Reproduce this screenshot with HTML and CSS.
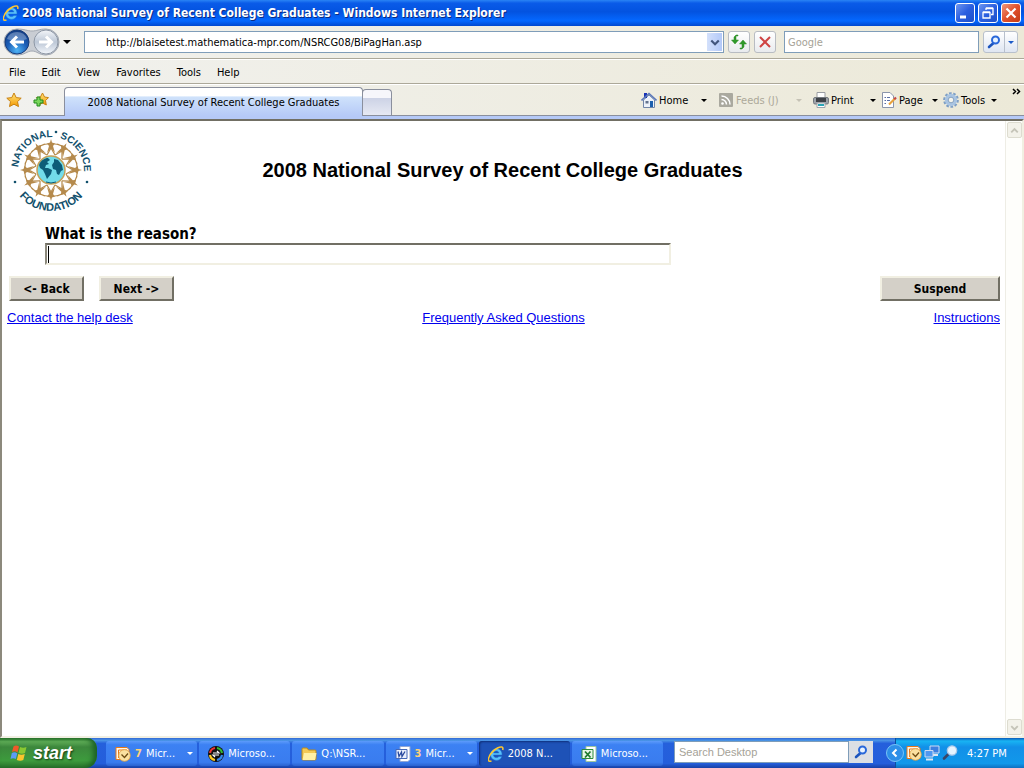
FILE: index.html
```html
<!DOCTYPE html>
<html lang="en">
<head>
    <meta charset="UTF-8">
    <title>2008 National Survey of Recent College Graduates</title>
    <link rel="stylesheet" href="styles.css">
</head>
<body>
    <!-- shared icons -->
    <svg class="defs" width="0" height="0">
        <defs>
            <linearGradient id="gold" x1="0" y1="0" x2="0" y2="1">
                <stop offset="0" stop-color="#ffe680"/><stop offset="1" stop-color="#f59a00"/>
            </linearGradient>
            <radialGradient id="blue-ball" cx="50%" cy="85%" r="85%">
                <stop offset="0" stop-color="#4fb4f5"/><stop offset=".5" stop-color="#1c5fb8"/><stop offset="1" stop-color="#123a80"/>
            </radialGradient>
            <linearGradient id="grey-ball" x1="0" y1="0" x2="0" y2="1">
                <stop offset="0" stop-color="#f4f6f9"/><stop offset=".5" stop-color="#bcc7d6"/><stop offset="1" stop-color="#f2f6fb"/>
            </linearGradient>
        </defs>
        <symbol id="ie" viewBox="0 0 16 16">
            <path d="M14 9H5.500c.1 1.700 1.300 2.600 2.900 2.600 1.200 0 1.900-.4 2.400-1.100h3c-.8 2.500-2.800 3.900-5.400 3.900-3.500 0-5.900-2.400-5.900-5.800 0-3.500 2.400-5.900 5.900-5.900 3.600 0 5.900 2.500 5.600 6.300zM5.600 6.900h5.200c-.1-1.200-1.100-2-2.500-2s-2.400.8-2.700 2z" fill="#58c0fa" stroke="#1b6fd0" stroke-width=".5"/>
            <path d="M3.500 14.800C1 16.200-.6 14.500 1 11 2.500 7.500 6 3.800 9.500 2c3.600-1.900 6.200-1.400 5.200 2" fill="none" stroke="#ffc72e" stroke-width="1.500"/>
        </symbol>
        <symbol id="lens" viewBox="0 0 16 16">
            <path d="M7 9.500 3 13" stroke="#1c54bd" stroke-width="2.600" stroke-linecap="round"/>
            <circle cx="9.500" cy="6" r="3.500" fill="#e8f3ff" stroke="#2a68da" stroke-width="2"/>
        </symbol>
        <symbol id="outlook" viewBox="0 0 16 16">
            <path d="M1 1.500h11l2 2v10H1z" fill="#fff6e6" stroke="#e8791a"/>
            <path d="M3.500 12V4H12" stroke="#e8791a" fill="none"/>
            <circle cx="9.500" cy="9.500" r="5.800" fill="#fbe0a0" stroke="#e0a040" stroke-width=".8"/>
            <path d="m6.500 8.500 3 3 3.500-4" fill="none" stroke="#6d4a12" stroke-width="1.300"/>
        </symbol>
    </svg>

    <header class="titlebar">
        <svg class="icon"><use href="#ie"/></svg>
        <span class="titlebar-text">2008 National Survey of Recent College Graduates - Windows Internet Explorer</span>
        <button class="win-btn" aria-label="Minimize"><svg viewBox="0 0 18 18"><path d="M4 13h6" stroke="#fff" stroke-width="3"/></svg></button>
        <button class="win-btn" aria-label="Restore"><svg viewBox="0 0 18 18"><path d="M7 6V4.500h7v6h-2M7 4h7M4 8.500h7v5.500H4zM4 8h7" stroke="#fff" stroke-width="1.300" fill="none"/></svg></button>
        <button class="win-btn win-close" aria-label="Close"><svg viewBox="0 0 18 18"><path d="m4.500 4.500 9 9m0-9-9 9" stroke="#fff" stroke-width="2.200"/></svg></button>
    </header>

    <div class="navbar">
        <div class="history">
            <svg width="60" height="30" viewBox="0 0 60 30">
                <path d="M16 2c8 0 10 2 15 2s7-2 14-2a13 13 0 0 1 0 26c-7 0-9-4-14-4s-7 4-15 4a13 13 0 0 1 0-26z" fill="#c9cdd3" stroke="#a2a8b2"/>
                <circle cx="16" cy="15" r="12" fill="url(#blue-ball)" stroke="#173c7a"/>
                <path d="M6 12a10.500 10 0 0 1 20 0c-6 2-14 2-20 0z" fill="#fff" opacity=".3"/>
                <path d="M23 15H11m5-5.500L10.500 15l5.500 5.500" fill="none" stroke="#fff" stroke-width="3"/>
                <circle cx="45" cy="15" r="12" fill="url(#grey-ball)" stroke="#8d97a5"/>
                <path d="M38 15h12m-5-5.500 5.500 5.500-5.500 5.500" fill="none" stroke="#fff" stroke-width="3"/>
            </svg>
            <i class="arrow"></i>
        </div>
        <div class="address">
            <input type="text" aria-label="Address" value="http://blaisetest.mathematica-mpr.com/NSRCG08/BiPagHan.asp">
            <button class="address-drop" aria-label="Show addresses"><svg viewBox="0 0 14 18"><path d="m4 7 3.500 3.500L11 7" fill="none" stroke="#42557c" stroke-width="2"/></svg></button>
        </div>
        <button class="nav-btn" aria-label="Refresh"><svg viewBox="0 0 20 20"><path d="M9 4H7v4h2.500L6 12 2.500 8H5V5l2-2h2zM11 16h2v-4h-2.500L14 8l3.500 4H15v3l-2 2h-2z" fill="#2f9a2a" stroke="#2f8a24" stroke-width=".5"/></svg></button>
        <button class="nav-btn" aria-label="Stop"><svg viewBox="0 0 20 20"><path d="m5 5 10 10m0-10L5 15" stroke="#cf4343" stroke-width="2"/></svg></button>
        <input class="search" type="text" aria-label="Search the web" placeholder="Google">
        <div class="search-go">
            <button aria-label="Search"><svg class="icon"><use href="#lens"/></svg></button>
            <button aria-label="Search options"><i class="arrow arrow-blue"></i></button>
        </div>
    </div>

    <nav class="menubar">
        <button>File</button>
        <button>Edit</button>
        <button>View</button>
        <button>Favorites</button>
        <button>Tools</button>
        <button>Help</button>
    </nav>

    <div class="tabbar">
        <button class="fav" aria-label="Favorites Center"><svg viewBox="0 0 16 16"><path d="m8 1 2.200 4.600 5 .6-3.700 3.400 1 5L8 12.200l-4.500 2.400 1-5L.8 6.200l5-.6z" fill="url(#gold)" stroke="#c98212"/></svg></button>
        <button class="fav" aria-label="Add to Favorites"><svg viewBox="0 0 16 16"><path d="m9.500 1 2 4 4 .6-3 3 .8 4.400-3.800-2-3.800 2 .7-4.400-3-3 4-.6z" fill="url(#gold)" stroke="#c98212"/><path d="M4 5h3v3h3v3H7v3H4v-3H1V8h3z" fill="#79d65b" stroke="#238a1d"/></svg></button>
        <button class="tab">2008 National Survey of Recent College Graduates</button>
        <button class="tab-new" aria-label="New Tab"></button>
        <div class="commands">
            <button><svg viewBox="0 0 16 16"><path d="M2.500 8v7.500h11V8L8 3z" fill="#edf2fa" stroke="#7286a8"/><path d="M3 1h3v5H3z" fill="#1832b5"/><path d="M.5 8.500 8 1.500l7.500 7" fill="none" stroke="#5b78b9" stroke-width="1.600"/><path d="M9 9h3v6H9z" fill="#1b5fae"/><path d="M4.500 9h3v2.500h-3z" fill="#64748f"/></svg><span>Home</span><i class="arrow"></i></button>
            <button class="off"><svg viewBox="0 0 16 16"><rect x="1" y="1" width="14" height="14" rx="1" fill="#aaa99f"/><circle cx="4.500" cy="11.500" r="1.300" fill="#fff"/><path d="M3.500 7.500a5 5 0 0 1 5 5M3.500 4a8.500 8.500 0 0 1 8.500 8.500" fill="none" stroke="#fff" stroke-width="1.500"/></svg><span>Feeds (J)</span><i class="arrow"></i></button>
            <button><svg viewBox="0 0 16 16"><path d="M4 6V.5h8V6" fill="#fff" stroke="#9a9da3"/><rect x=".5" y="5.500" width="15" height="6.500" rx="1.500" fill="#9da2aa" stroke="#74797f"/><path d="M3 6h10v4H3z" fill="#3d4147"/><path d="M4 11h8v4.500H4z" fill="#fff" stroke="#a0a4ab"/><path d="M5 12h6v2H5z" fill="#2aa5b5"/></svg><span>Print</span><i class="arrow"></i></button>
            <button><svg viewBox="0 0 16 16"><path d="M1.500.5H9l3.500 3.500v11.500h-11z" fill="#fff" stroke="#8b95ab"/><path d="M3.500 5.500H5m1 0h3M3.500 8.500H5m1 0h3M3.500 11.500H5" stroke="#5b6fa5"/><path d="m8 12.500 6-6" stroke="#e8a23c" stroke-width="2.200"/><path d="m13.300 7.200 1.700-1.700" stroke="#c5484a" stroke-width="2.200"/></svg><span>Page</span><i class="arrow"></i></button>
            <button><svg viewBox="0 0 16 16"><circle cx="8" cy="8" r="6.700" fill="none" stroke="#7d9ec5" stroke-width="2.300" stroke-dasharray="2.600 1.600"/><circle cx="8" cy="8" r="4.500" fill="none" stroke="#a9c4e2" stroke-width="3.300"/><circle cx="8" cy="8" r="2.800" fill="#f5f4ec" stroke="#6d8fb8" stroke-width=".8"/></svg><span>Tools</span><i class="arrow"></i></button>
        </div>
        <button class="more" aria-label="More commands"><svg viewBox="0 0 9 7"><path d="m1 1 2.500 2.500L1 6m4-5 2.500 2.500L5 6" fill="none" stroke="#000" stroke-width="1.500"/></svg></button>
    </div>

    <div class="viewport">
        <main class="page">
            <div class="page-head">
                <svg class="logo" viewBox="-42 -42 84 84" role="img" aria-label="National Science Foundation">
                    <defs>
                        <path id="ring-top" d="M-33 0a33 33 0 0 1 66 0"/>
                        <path id="ring-bottom" d="M-41 0a41 41 0 0 0 82 0"/>
                        <g id="figure">
                            <path d="M-7.500-25.500 0-26.500l7.500 1M0-22l-4 7M0-22l4 7" fill="none" stroke="#b58a4c" stroke-width="1.200"/>
                            <path d="M-4-26.500-1-27.500 0-31l1 3.500 3 1-2 2.500 2 7-4-5-4 5 2-7z" fill="#b58a4c"/>
                        </g>
                    </defs>
                    <use href="#figure"/>
                    <use href="#figure" transform="rotate(30)"/>
                    <use href="#figure" transform="rotate(60)"/>
                    <use href="#figure" transform="rotate(90)"/>
                    <use href="#figure" transform="rotate(120)"/>
                    <use href="#figure" transform="rotate(150)"/>
                    <use href="#figure" transform="rotate(180)"/>
                    <use href="#figure" transform="rotate(210)"/>
                    <use href="#figure" transform="rotate(240)"/>
                    <use href="#figure" transform="rotate(270)"/>
                    <use href="#figure" transform="rotate(300)"/>
                    <use href="#figure" transform="rotate(330)"/>
                    <circle r="14" fill="#72dcea" stroke="#c3a15c" stroke-width="1.500"/>
                    <path d="M-12-5c2-5 6-7 9-7l2 2-3 2 2 2-3 1-1 3 3 0 4 2-1 4-4 5-2-5-2-4-3-2zM3-11l4 1 4 5 1 5-2 1-2 4-2-1-1-4-3-1-1-4 2-3z" fill="#0d5c78"/>
                    <path d="M-5 12q5 2 10 0" stroke="#0d5c78" fill="none"/>
                    <g class="logo-text">
                        <text><textPath href="#ring-top" startOffset="27%">NATIONAL</textPath></text>
                        <text><textPath href="#ring-top" startOffset="80%">SCIENCE</textPath></text>
                        <text class="logo-base"><textPath href="#ring-bottom" startOffset="50%">FOUNDATION</textPath></text>
                    </g>
                    <g fill="#11506c"><circle cx="5" cy="-38" r="1.300"/><circle cx="-36" cy="12" r="1.300"/><circle cx="36" cy="12" r="1.300"/></g>
                </svg>
                <h1>2008 National Survey of Recent College Graduates</h1>
            </div>
            <form class="survey" onsubmit="return false">
                <div class="question">
                    <label for="reason">What is the reason?</label>
                    <input type="text" id="reason">
                </div>
                <div class="buttons">
                    <button type="button">&lt;- Back</button>
                    <button type="button">Next -&gt;</button>
                    <button type="button" class="suspend">Suspend</button>
                </div>
            </form>
            <div class="links">
                <a href="#">Contact the help desk</a>
                <a href="#">Frequently Asked Questions</a>
                <a href="#">Instructions</a>
            </div>
        </main>
        <div class="scrollbar">
            <button aria-label="Scroll up"><svg viewBox="0 0 14 14"><path d="m3.500 9 3.500-3.500L10.500 9" fill="none" stroke="#c5c4b8" stroke-width="2"/></svg></button>
            <button aria-label="Scroll down"><svg viewBox="0 0 14 14"><path d="M3.500 5.500 7 9l3.500-3.500" fill="none" stroke="#c5c4b8" stroke-width="2"/></svg></button>
        </div>
    </div>

    <footer class="taskbar">
        <button class="start">
            <svg viewBox="0 0 18 18"><path d="M3.500 2.500Q6 .5 9 2.500L7.500 8.500Q5 6.500 2 8z" fill="#f0592a"/><path d="M10 3q3 1.500 6.500 0L15 9q-3 1.500-6.500 0z" fill="#8ac832"/><path d="M1.800 9q3-1.500 5.500.500L5.800 15Q3 13.500.5 15z" fill="#5c9cf5"/><path d="M8.300 10q3 1.500 6.500 0L13.300 16q-3 1.500-6.500 0z" fill="#fbc52d"/></svg>
            <span>start</span>
        </button>
        <div class="tasks">
            <button><svg class="icon"><use href="#outlook"/></svg><b>7</b><span>Micr...</span><i class="arrow"></i></button>
            <button><svg class="icon" viewBox="0 0 16 16"><circle cx="8" cy="8" r="8" fill="#111"/><g fill="none" stroke-width="2.200"><path d="M2 7a6 6 0 0 1 5-5" stroke="#e33"/><path d="M9 2a6 6 0 0 1 5 5" stroke="#3b3"/><path d="M14 9a6 6 0 0 1-5 5" stroke="#38e"/><path d="M7 14a6 6 0 0 1-5-5" stroke="#fc2"/></g><path d="M5 7h6L9 5m2 4H5l2 2" fill="none" stroke="#fff" stroke-width="1.200"/></svg><span>Microso...</span></button>
            <button><svg class="icon" viewBox="0 0 16 16"><path d="M1 3q0-1 1-1h4l1.500 2H14q1 0 1 1v8q0 1-1 1H2q-1 0-1-1z" fill="#f3c955" stroke="#b98b1e"/><path d="M3 7h12.500L14 14H1.500z" fill="#fff0a5"/></svg><span>Q:\NSR...</span></button>
            <button><svg class="icon" viewBox="0 0 16 16"><path d="M5 .5h10v13l-2 2H5z" fill="#fff" stroke="#8fa5d5"/><path d="M1 3.500h11v9H1z" fill="#e9effc" stroke="#4568b8"/><path d="m3 5.500 1 5L6.500 6l.5 4.500 3-5" fill="none" stroke="#27489e" stroke-width="1.300"/></svg><b>3</b><span>Micr...</span><i class="arrow"></i></button>
            <button class="active"><svg class="icon"><use href="#ie"/></svg><span>2008 N...</span></button>
            <button><svg class="icon" viewBox="0 0 16 16"><path d="M5 .5h10v15H5z" fill="#fff" stroke="#9fc79f"/><path d="M1 3.500h11v9H1z" fill="#e9f7e9" stroke="#2d8a3c"/><path d="m4 5.500 5.500 6m0-6L4 11.500" stroke="#1f7a2e" stroke-width="1.800"/></svg><span>Microso...</span></button>
        </div>
        <div class="desk-search">
            <input type="text" aria-label="Search Desktop" placeholder="Search Desktop">
            <button aria-label="Search"><svg class="icon"><use href="#lens"/></svg></button>
        </div>
        <div class="tray">
            <button class="tray-toggle" aria-label="Show hidden icons"><svg viewBox="0 0 18 18"><circle cx="9" cy="9" r="8.500" fill="#2d8fe8" stroke="#79c3f5"/><path d="M10.500 5.500 7 9l3.500 3.500" fill="none" stroke="#fff" stroke-width="2"/></svg></button>
            <svg class="icon"><use href="#outlook"/></svg>
            <svg class="icon" viewBox="0 0 16 16"><path d="M6 1h9v7H6z" fill="#3d7fe0" stroke="#cfdcf2"/><path d="M9 10h5" stroke="#dfe6f2" stroke-width="2"/><path d="M1 5.500h8v6.500H1z" fill="#4f97f0" stroke="#cfdcf2"/><path d="M2 14.500h7" stroke="#dfe6f2" stroke-width="2"/></svg>
            <svg class="icon" viewBox="0 0 16 16"><path d="m6.500 9-4.500 4.500" stroke="#3a4668" stroke-width="2.600" stroke-linecap="round"/><circle cx="10" cy="5.500" r="4.700" fill="#e6f4ff" stroke="#a9c8ea" stroke-width="1.300"/></svg>
            <span class="clock">4:27 PM</span>
        </div>
    </footer>
</body>
</html>
```
FILE: styles.css
```css
* {
    box-sizing: border-box;
}

body {
    margin: 0;
    height: 100vh;
    display: flex;
    flex-direction: column;
    overflow: hidden;
    background: #fff;
    font-family: "DejaVu Sans Condensed", Tahoma, sans-serif;
    font-size: 11px;
    color: #000;
}

button, input {
    font: inherit;
    color: inherit;
    margin: 0;
    padding: 0;
    border: 0;
    border-radius: 0;
    background: none;
}

button {
    white-space: nowrap;
}

svg {
    display: block;
    flex: none;
}

.defs {
    position: absolute;
}

.icon {
    width: 16px;
    height: 16px;
}

.arrow {
    flex: none;
    border: 3px solid transparent;
    border-top-color: #000;
    border-bottom: 0;
}

.arrow-blue {
    border-top-color: #1c5bc8;
}

/* window title */
.titlebar {
    flex: none;
    display: flex;
    align-items: center;
    gap: 3px;
    height: 26px;
    padding: 0 3px;
    background: linear-gradient(#2a84f5, #0a5be8 12%, #0353e0 45%, #0468ff 80%, #0148cf);
    color: #fff;
}

.titlebar-text {
    flex: 1;
    font-size: 12px;
    font-weight: bold;
    text-shadow: 1px 1px #0a2a80;
    white-space: nowrap;
}

.win-btn {
    width: 20px;
    height: 20px;
    border: 1px solid #fff;
    border-radius: 3px;
    background: linear-gradient(135deg, #6e96f0, #2b5fe0 50%, #1d4fc8);
}

.win-close {
    background: linear-gradient(135deg, #f0987c, #e0512c 50%, #c33c16);
}

/* address row */
.navbar, .menubar, .tabbar {
    flex: none;
    display: flex;
    background: linear-gradient(90deg, #f1f1ee, #ece9d8);
}

.navbar {
    align-items: center;
    gap: 4px;
    height: 33px;
    padding: 0 6px 0 1px;
    border-bottom: 1px solid #aca899;
}

.history {
    display: flex;
    align-items: center;
    gap: 2px;
    width: 79px;
}

.history .arrow {
    border-width: 4px 4px 0;
}

.address {
    flex: 1;
    display: flex;
    height: 22px;
    padding: 1px;
    border: 1px solid #7f9db9;
    background: #fff;
}

.address input {
    flex: 1;
    min-width: 0;
    padding-left: 20px;
}

.address-drop {
    width: 15px;
    background: linear-gradient(90deg, #d3e0fb, #b3c9f8);
}

.nav-btn {
    width: 22px;
    height: 22px;
    border: 1px solid #b8bcc2;
    border-radius: 3px;
    background: linear-gradient(#fff, #e9ebee);
}

.search {
    width: 195px;
    height: 22px;
    margin-left: 4px;
    padding: 0 3px;
    border: 1px solid #7f9db9;
    background: #fff;
}

::placeholder {
    color: #a5a297;
    opacity: 1;
}

.search-go {
    display: flex;
    height: 22px;
    border: 1px solid #b8c0cc;
    border-radius: 3px;
    background: linear-gradient(#fff, #dfe6f2);
}

.search-go button {
    display: flex;
    align-items: center;
    justify-content: center;
    width: 20px;
}

.search-go button + button {
    width: 13px;
    border-left: 1px solid #b8c0cc;
}

.menubar {
    gap: 16px;
    height: 25px;
    padding: 1px 9px 0;
    border-top: 1px solid #fff;
    border-bottom: 1px solid #aca899;
}

/* tabs and command bar */
.tabbar {
    height: 35px;
    padding: 3px 3px 0 6px;
    border-bottom: 3px solid #b5c9f7;
    box-shadow: inset 0 1px #fff, inset 0 -1px #8a8f9d;
}

.fav {
    width: 16px;
    height: 25px;
    margin-right: 11px;
}

.fav svg {
    width: 16px;
    height: 16px;
}

.tab {
    flex: 0 1 299px;
    min-width: 0;
    margin-left: 4px;
    border: 1px solid #8a8f9d;
    border-bottom: 0;
    border-radius: 4px 4px 0 0;
    background: linear-gradient(#fff 28%, #cfe2fb 32%, #b5c9f7);
}

.tab-new {
    width: 30px;
    margin: 2px 0 1px -1px;
    border: 1px solid #8a8f9d;
    border-bottom: 0;
    border-radius: 4px 4px 0 0;
    background: linear-gradient(#f6f6fb 30%, #cdd3e6 34%, #e6e9f3);
}

.commands {
    display: grid;
    grid-template-columns: 77px 95px 68px 62px 59px;
    height: 26px;
    margin-left: auto;
}

.commands button {
    display: flex;
    align-items: center;
    gap: 2px;
    padding-right: 5px;
}

.commands svg {
    width: 16px;
    height: 16px;
}

.commands .arrow {
    margin-left: auto;
}

.commands button:nth-child(-n+2) {
    padding-right: 11px;
}

.commands .off {
    color: #aca899;
}

.off .arrow {
    border-top-color: #c5c2b5;
}

.more {
    width: 9px;
    height: 9px;
    margin-left: 10px;
}

.more svg {
    width: 9px;
}

/* survey page */
.viewport {
    flex: 1;
    min-height: 0;
    display: flex;
    border: 2px solid #716f64;
    border-color: #716f64 #f1efe2 #f1efe2 #8c897c;
}

.page {
    flex: 1;
    min-width: 0;
    padding: 7px 5px;
    font-family: "Liberation Sans", Arial, sans-serif;
}

.page-head {
    display: flex;
    align-items: center;
    padding-left: 2px;
}

.page-head h1 {
    flex: 1;
    margin: 0 88px 0 0;
    font-size: 20px;
    text-align: center;
}

.logo {
    width: 84px;
    height: 84px;
    overflow: visible;
}

.logo-text {
    fill: #11506c;
    font-size: 10px;
    font-weight: bold;
    text-anchor: middle;
}

.logo-base {
    font-size: 11px;
}

.question {
    padding: 13px 0 11px 38px;
    font-family: "DejaVu Sans Condensed", Tahoma, sans-serif;
}

.question label {
    display: block;
    font-size: 15px;
    font-weight: bold;
    line-height: 18px;
}

/* the text cursor is the dark line at the left */
.question input {
    display: block;
    width: 66%;
    max-width: 626px;
    height: 22px;
    padding: 0 4px;
    border: 2px solid #716f64;
    border-color: #716f64 #f1efe2 #f1efe2 #8c897c;
    background: linear-gradient(#000, #000) 1px 1px / 1px 17px no-repeat #fff;
}

.buttons {
    display: flex;
    gap: 15px;
    padding-left: 2px;
}

.buttons button {
    width: 75px;
    height: 25px;
    border: 2px solid;
    border-color: #f1efe2 #716f64 #716f64 #f1efe2;
    background: #d4d0c8;
    font-family: "DejaVu Sans Condensed", Tahoma, sans-serif;
    font-size: 12px;
    font-weight: bold;
}

.buttons .suspend {
    width: 120px;
    margin-left: auto;
}

.links {
    display: grid;
    grid-template-columns: 1fr auto 1fr;
    padding-top: 9px;
    font-size: 13px;
}

.links a {
    color: #00e;
    justify-self: start;
}

.links a:last-child {
    justify-self: end;
}

.scrollbar {
    flex: none;
    display: flex;
    flex-direction: column;
    justify-content: space-between;
    width: 17px;
    padding: 1px;
    border-left: 1px solid #eeede5;
    background: #fefefb;
}

.scrollbar button {
    width: 15px;
    height: 16px;
    border: 1px solid #dddcd0;
    border-radius: 2px;
    background: #f3f2ea;
}

/* taskbar */
.taskbar {
    flex: none;
    display: flex;
    height: 30px;
    background: linear-gradient(#3168d5, #4993e6 8%, #2560dc 18%, #245edb 85%, #1941a5);
    color: #fff;
}

.start {
    display: flex;
    align-items: center;
    gap: 5px;
    width: 97px;
    padding-left: 10px;
    border-radius: 0 10px 12px 0;
    background: linear-gradient(#2f7d2f, #5eac56 12%, #3c873c 30%, #3d9b3d 75%, #2b752b);
    box-shadow: inset -4px 0 5px #1d6325;
    font-family: "Liberation Sans", Arial, sans-serif;
    font-size: 18px;
    font-weight: bold;
    font-style: italic;
    text-shadow: 1px 1px 2px #123a12;
}

.start svg {
    width: 18px;
    height: 18px;
}

.tasks {
    flex: 1;
    min-width: 0;
    display: flex;
    gap: 2px;
    padding: 3px 11px 2px 9px;
}

.tasks button {
    flex: 1;
    min-width: 0;
    display: flex;
    align-items: center;
    gap: 4px;
    padding: 0 4px 0 9px;
    border-radius: 3px;
    background: linear-gradient(#5d9bfb, #3c81f3 15%, #3a7cef 85%, #2b62cf);
}

.tasks .active {
    background: #1e52b7;
    box-shadow: inset 1px 1px 2px #10307a;
}

.tasks b {
    color: #ffd27a;
}

.tasks .arrow {
    margin-left: auto;
    border-top-color: #fff;
}

.desk-search {
    display: flex;
    width: 199px;
    height: 22px;
    margin: 3px 14px 0 0;
}

.desk-search input {
    flex: 1;
    min-width: 0;
    padding: 0 4px;
    border: 1px solid #7f9db9;
    background: #fff;
    font-family: "Liberation Sans", Arial, sans-serif;
    font-size: 11px;
}

.desk-search button {
    display: flex;
    align-items: center;
    justify-content: center;
    width: 24px;
    background: #dcdfe4;
}

.tray {
    display: flex;
    align-items: center;
    gap: 2px;
    width: 129px;
    margin-left: 8px;
    border-left: 1px solid #0c4f9e;
    background: linear-gradient(#0c59b9, #18b4f3 10%, #1290e8 30%, #1198ea 85%, #0f6fc0);
}

.tray-toggle {
    width: 18px;
    height: 18px;
    margin-left: -10px;
}

.clock {
    margin-left: 7px;
    white-space: nowrap;
}
```
